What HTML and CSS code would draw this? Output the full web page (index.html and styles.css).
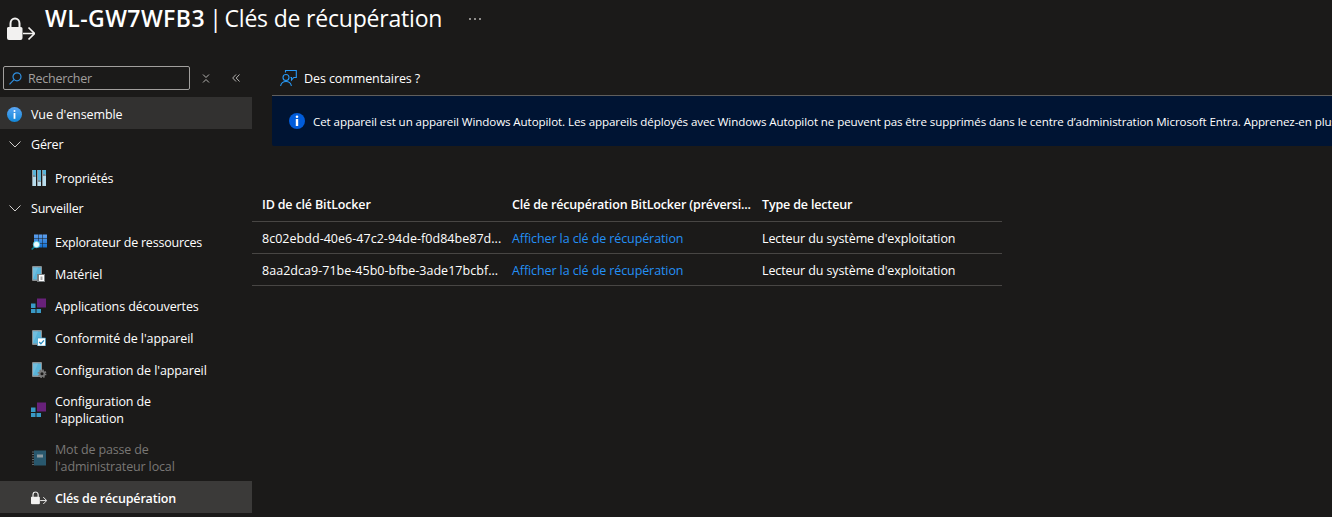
FILE: index.html
```html
<!DOCTYPE html>
<html lang="fr">
<head>
<meta charset="utf-8">
<title>WL-GW7WFB3 | Clés de récupération</title>
<link rel="stylesheet" href="styles.css">
</head>
<body>
<svg class="defs" width="0" height="0" aria-hidden="true">
  <defs>
    <linearGradient id="blue" x1="0" y1="0" x2="0" y2="1"><stop offset="0" stop-color="#5ba6f4"/><stop offset="1" stop-color="#1287d8"/></linearGradient>
    <linearGradient id="grid" x1="0" y1="0" x2="0" y2="1"><stop offset="0" stop-color="#5ea0ef"/><stop offset="1" stop-color="#1570cf"/></linearGradient>
    <symbol id="lock" viewBox="0 0 28 24">
      <path d="M3.500 10.500V6.500a4.500 5 0 0 1 9 0v4" fill="none" stroke="#f2f1f0" stroke-width="2"/>
      <path d="M2 10h12a1.500 1.500 0 0 1 1.500 1.500V21a2 2 0 0 1-2 2H2a2 2 0 0 1-2-2v-9.500A1.500 1.500 0 0 1 2 10z" fill="#f2f1f0"/>
      <path d="M16 16.500h11M21.500 10.500l6 6-6 6" fill="none" stroke="#f2f1f0" stroke-width="1.700"/>
    </symbol>
    <symbol id="apps" viewBox="0 0 16 16">
      <path d="M6 .5h9v9H6z" fill="#68217a"/>
      <path d="M0 5.500h4.500V10H0zM0 11h4.500v4H0zM5.500 11H10v4H5.500z" fill="#3999c6"/>
    </symbol>
    <symbol id="device" viewBox="0 0 16 16">
      <rect x="1" y="0" width="10" height="15" rx="1" fill="#8a8f92"/>
      <rect x="2" y="1.500" width="8" height="12" fill="#59b4d9"/>
      <path d="M2 1.500h5L2 13.500z" fill="#72bddd"/>
    </symbol>
  </defs>
</svg>
<header class="header">
  <svg class="header-icon" viewBox="0 0 28 24"><use href="#lock"/></svg>
  <h1 class="title"><b class="t-name">WL-GW7WFB3</b><span class="t-bar"> | </span><span class="t-rest">Clés de récupération</span></h1>
  <span class="more"><i></i><i></i><i></i></span>
</header>
<div class="body">
  <nav class="sidebar">
    <div class="search-row">
      <div class="search">
        <svg width="13" height="13" viewBox="0 0 13 13" fill="none" stroke="#2f8fe0" stroke-width="1.200"><circle cx="8" cy="4.800" r="4"/><path d="M5 7.700L.5 12.300"/></svg>
        <span>Rechercher</span>
      </div>
      <svg class="expand" width="8" height="9" viewBox="0 0 8 9" fill="none" stroke="#b5b3b1"><path d="M1 .5l3 3 3-3M1 8.500l3-3 3 3"/></svg>
      <svg class="collapse" width="8" height="8" viewBox="0 0 8 8" fill="none" stroke="#b5b3b1"><path d="M4 .5L.7 4 4 7.500M7.500.5L4.200 4l3.300 3.500"/></svg>
    </div>
    <div class="item top hover">
      <svg class="info" width="15" height="15" viewBox="0 0 15 15"><circle cx="7.500" cy="7.500" r="7.500" fill="url(#blue)"/><circle cx="7.500" cy="3.900" r="1" fill="#fff"/><path d="M6.600 6h1.800v5.800H6.600z" fill="#fff"/></svg>
      <span>Vue d'ensemble</span>
    </div>
    <div class="item group"><svg width="12" height="7" viewBox="0 0 12 7" fill="none" stroke="#d0cecc"><path d="M.5.5L6 6 11.500.5"/></svg><span>Gérer</span></div>
    <div class="item tight">
      <svg class="icon" viewBox="0 0 16 16"><path d="M1 0h4v16H1zM6 0h4v16H6zM11 0h4v16h-4z" fill="#8f9ca3"/><path d="M2 0h3v7H2zM7 0h3v11H7zM12 0h3v5h-3z" fill="#59b4d9"/><path d="M2 7h3v9H2zM7 12h3v4H7zM12 6h3v10h-3z" fill="#b8dcec"/><path d="M2 5h2v2H2zM7 10h2v2H7zM12 4h2v2h-2z" fill="#7d8e98"/></svg>
      <span>Propriétés</span>
    </div>
    <div class="item group"><svg width="12" height="7" viewBox="0 0 12 7" fill="none" stroke="#d0cecc"><path d="M.5.5L6 6 11.500.5"/></svg><span>Surveiller</span></div>
    <div class="item tight">
      <svg class="icon" viewBox="0 0 16 16"><path d="M3 .5h4v4H3zM7.500.5h4v4h-4zM12 .5h4v4h-4zM3 5h4v4H3zM7.500 5h4v4h-4zM12 5h4v4h-4zM7.500 9.500h4v4h-4zM12 9.500h4v4h-4z" fill="url(#grid)"/><path d="M4 12.200L.7 15.500" stroke="#087f91" stroke-width="1.600"/><circle cx="5.500" cy="10.500" r="3.200" fill="#e6fbff" stroke="#35c9e8" stroke-width=".8"/></svg>
      <span>Explorateur de ressources</span>
    </div>
    <div class="item">
      <svg class="icon" viewBox="0 0 16 16"><use href="#device"/><path d="M6 8h8v8H6z" fill="#7a7e80"/><path d="M8 9h5v6H8z" fill="#fff"/><path d="M9.500 10.500h2V14h-2z" fill="#aaa"/></svg>
      <span>Matériel</span>
    </div>
    <div class="item"><svg class="icon" viewBox="0 0 16 16"><use href="#apps"/></svg><span>Applications découvertes</span></div>
    <div class="item">
      <svg class="icon" viewBox="0 0 16 16"><use href="#device"/><path d="M6.500 8h8v8h-8z" fill="#fff" stroke="#3999c6" stroke-width=".7"/><path d="M8.200 12l1.700 1.800 3-3.500" fill="none" stroke="#2388bf" stroke-width="1.300"/></svg>
      <span>Conformité de l'appareil</span>
    </div>
    <div class="item">
      <svg class="icon" viewBox="0 0 16 16"><use href="#device"/><circle cx="11" cy="11.800" r="3.600" fill="none" stroke="#7a7a7a" stroke-width="1.700" stroke-dasharray="1.410"/><circle cx="11" cy="11.800" r="2.400" fill="#1b1a19" stroke="#7a7a7a" stroke-width="1.700"/></svg>
      <span>Configuration de l'appareil</span>
    </div>
    <div class="item two"><svg class="icon" viewBox="0 0 16 16"><use href="#apps"/></svg><span>Configuration de<br>l'application</span></div>
    <div class="item two disabled">
      <svg class="icon" viewBox="0 0 16 16"><path d="M3 .5h12v15H3z" fill="#29586e"/><path d="M1 2h2M1 4.500h2M1 7h2M1 9.500h2M1 12h2M1 14.500h2" stroke="#61676a"/><path d="M6 4.500h6v3H6z" fill="#8d9aa0"/></svg>
      <span>Mot de passe de<br>l'administrateur local</span>
    </div>
    <div class="item selected"><svg class="icon" viewBox="0 0 28 24"><use href="#lock"/></svg><span>Clés de récupération</span></div>
  </nav>
  <main class="main">
    <div class="toolbar">
      <svg width="17" height="17" viewBox="0 0 17 17" fill="none" stroke="#2899f5" stroke-width="1.100"><path d="M5.500 2.500v-2h10.800v7h-2.500L11.500 10V7.500h-1"/><circle cx="6" cy="7.500" r="3"/><path d="M.6 16a5.500 5.500 0 0 1 10.800 0"/></svg>
      <span>Des commentaires ?</span>
    </div>
    <div class="banner">
      <svg width="16" height="16" viewBox="0 0 16 16"><circle cx="8" cy="8" r="8" fill="#015cda"/><circle cx="8" cy="3.800" r="1.300" fill="#fff"/><path d="M6.800 6h2.400v7H6.800z" fill="#fff"/></svg>
      <span>Cet appareil est un appareil Windows Autopilot. Les appareils déployés avec Windows Autopilot ne peuvent pas être supprimés dans le centre d’administration Microsoft Entra. Apprenez-en plus</span>
    </div>
    <div class="table">
      <div class="row head"><span>ID de clé BitLocker</span><span>Clé de récupération BitLocker (préversi...</span><span>Type de lecteur</span></div>
      <div class="row"><span class="key">8c02ebdd-40e6-47c2-94de-f0d84be87d...</span><a>Afficher la clé de récupération</a><span>Lecteur du système d'exploitation</span></div>
      <div class="row"><span class="key">8aa2dca9-71be-45b0-bfbe-3ade17bcbf...</span><a>Afficher la clé de récupération</a><span>Lecteur du système d'exploitation</span></div>
    </div>
  </main>
</div>
</body>
</html>
```
FILE: styles.css
```css
* { box-sizing: border-box; }
body {
  margin: 0;
  height: 517px;
  overflow: hidden;
  background: #1b1a19;
  color: #fff;
  font: 12.5px/17px "Open Sans", "Noto Sans", sans-serif;
  letter-spacing: -0.1px;
  white-space: nowrap;
}
.defs { display: block; height: 0; }
.header { display: flex; height: 63px; padding-left: 7px; }
.header-icon { width: 28px; height: 24px; margin-top: 17px; }
.title { margin: 2px 0 0 10px; font-size: 23px; line-height: 32px; font-weight: 400; white-space: pre; }
.t-name { font-weight: 600; letter-spacing: 0.45px; }
.t-bar { letter-spacing: -1.7px; }
.t-rest { letter-spacing: -0.2px; }
.more { display: flex; gap: 3px; margin: 18px 0 0 27px; }
.more i { width: 2px; height: 2px; background: #8f8d8b; }
.body { display: flex; }
.sidebar { width: 252px; flex: none; }
.search-row { display: flex; align-items: center; height: 34px; padding: 0 0 4px 3px; }
.search { display: flex; align-items: center; gap: 6px; width: 187px; height: 24px; padding-left: 5px; border: 1px solid #a19f9d; border-radius: 2px; color: #a19f9d; letter-spacing: -0.24px; }
.expand { margin-left: 12px; }
.collapse { margin-left: 22px; }
.item { display: flex; align-items: center; gap: 8px; height: 32px; padding: 2px 0 0 31px; }
.icon { width: 16px; height: 16px; flex: none; }
.top { padding-left: 7px; gap: 9px; }
.group { padding: 0 0 2px 9px; gap: 10px; letter-spacing: -0.2px; }
.tight { letter-spacing: -0.22px; }
.hover { background: #323130; }
.two { height: 48px; }
.disabled { color: #797775; letter-spacing: -0.14px; }
.selected { background: #3b3a39; font-weight: 600; letter-spacing: -0.18px; }
.main { flex: 1; min-width: 0; overflow: hidden; }
.toolbar { display: flex; align-items: center; gap: 7px; height: 33px; margin-left: 20px; padding: 0 0 2px 8px; border-bottom: 1px solid #605e5c; }
.banner { display: flex; align-items: center; gap: 8px; height: 50px; margin-left: 20px; padding-left: 17px; background: #001433; border-radius: 0 0 0 2px; font-size: 11.6px; letter-spacing: -0.1px; }
.banner svg { flex: none; }
.banner span { padding-top: 1px; }
.table { width: 750px; margin-top: 41px; }
.row { display: grid; grid-template-columns: 250px 250px 250px; align-items: center; height: 32px; padding: 2px 0 0 10px; border-bottom: 1px solid #484644; }
.head { height: 35px; padding-top: 0; font-weight: 600; letter-spacing: -0.16px; }
.key { letter-spacing: 0.03px; }
.row a { color: #2490f5; }
```
